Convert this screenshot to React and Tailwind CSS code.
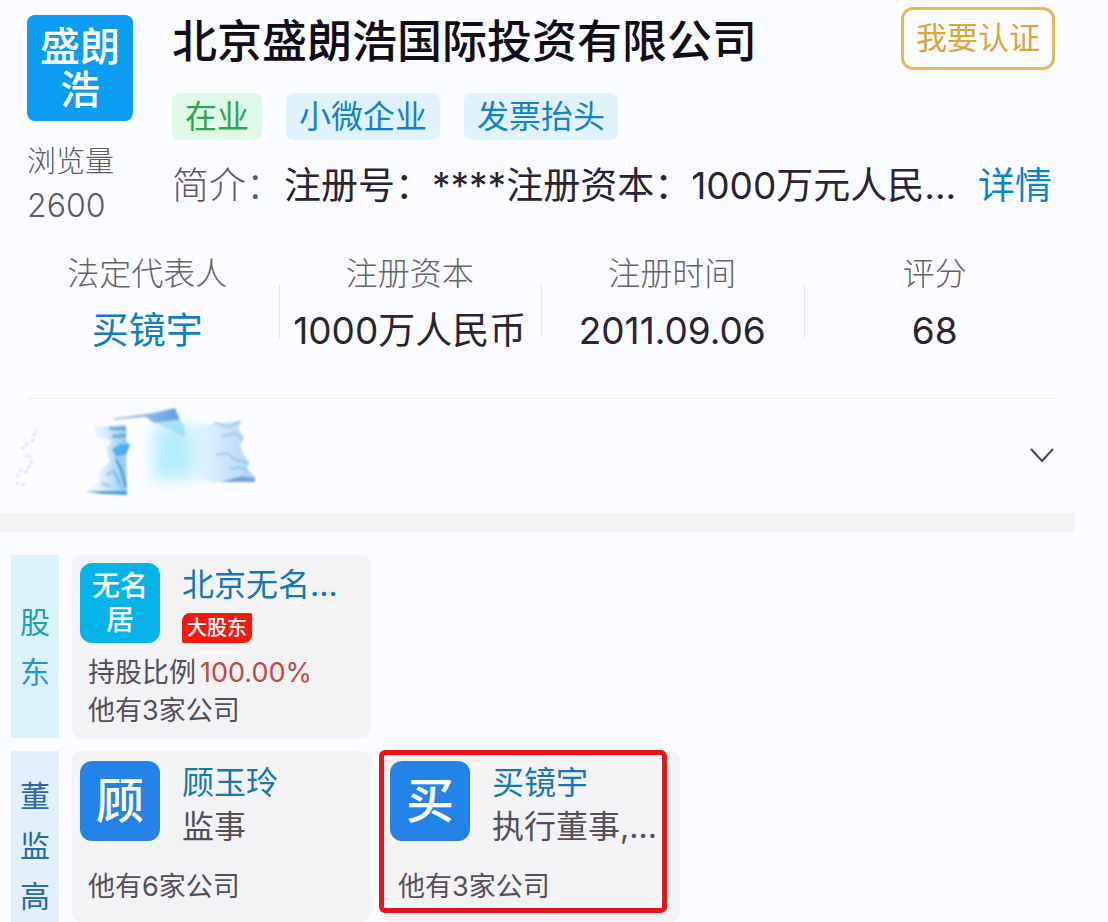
import { useState } from "react";

// ─── Data ─────────────────────────────────────────────────────────────────────
const TAGS = [
  { label: "在业", style: "bg-[#e0f9e6] text-[#2fa552]" },
  { label: "小微企业", style: "bg-[#e0f2fe] text-[#1283c6]" },
  { label: "发票抬头", style: "bg-[#e0f2fe] text-[#1283c6]" },
];

const STATS = [
  { label: "法定代表人", value: "买镜宇", href: "#legal" },
  { label: "注册资本", value: "1000万人民币" },
  { label: "注册时间", value: "2011.09.06" },
  { label: "评分", value: "68" },
];

const SHAREHOLDERS = [
  {
    name: "北京无名...",
    avatar: "无名居",
    color: "bg-[#06b3e8]",
    small: true,
    badge: "大股东",
    ratio: "100.00%",
    companies: "他有3家公司",
  },
];

const MANAGERS = [
  { name: "顾玉玲", avatar: "顾", color: "bg-[#2483e6]", role: "监事", companies: "他有6家公司" },
  { name: "买镜宇", avatar: "买", color: "bg-[#2483e6]", role: "执行董事,...", companies: "他有3家公司", marked: true },
];

// ─── Pieces ───────────────────────────────────────────────────────────────────
function PersonCard({ person }) {
  return (
    <article className={`relative w-[298px] shrink-0 rounded-lg bg-[#f3f3f6] px-2 ${person.ratio ? "pt-2 pb-2" : "pt-2.5 pb-4"}`}>
      <div className="flex gap-[22px]">
        <div
          className={`flex size-20 shrink-0 items-center justify-center rounded-xl text-center font-medium text-white ${person.color} ${
            person.small ? "px-3 text-[28px] leading-[34px]" : "text-5xl"
          }`}
        >
          {person.avatar}
        </div>
        <div className="whitespace-nowrap text-[32px] leading-[44px]">
          <a href="#person" className="block text-[#1478b4]">{person.name}</a>
          {person.badge && (
            <span className="mt-1.5 flex h-[30px] w-[70px] items-center justify-center rounded-tl-lg rounded-br-lg rounded-tr-xs rounded-bl-xs bg-[#f5190f] text-xl font-medium text-white">
              {person.badge}
            </span>
          )}
          {person.role && <p className="text-[#554e5a]">{person.role}</p>}
        </div>
      </div>
      <div className={`pl-2 text-[27px] leading-[38px] text-[#554e5a] ${person.ratio ? "mt-[11px]" : "mt-[19px]"}`}>
        {person.ratio && (
          <p className="flex gap-1">
            持股比例<span className="text-[#c24646]">{person.ratio}</span>
          </p>
        )}
        <p>{person.companies}</p>
      </div>
      {person.marked && (
        <div className="pointer-events-none absolute -top-px -left-[3px] h-[163px] w-[288px] rounded-md border-5 border-[#e61414]" />
      )}
    </article>
  );
}

function PeopleRow({ title, style, people }) {
  return (
    <section className="flex gap-[13px]">
      <h2 className={`flex w-12 shrink-0 flex-col items-center justify-center text-[30px] leading-[50px] ${style}`}>
        {title.split("").map((c) => (
          <span key={c}>{c}</span>
        ))}
      </h2>
      <div className="flex gap-3">
        {people.map((p) => (
          <PersonCard key={p.name} person={p} />
        ))}
      </div>
    </section>
  );
}

// Brush strokes that hide the phone number in the contact row
function Smudge() {
  return (
    <svg width="250" height="94" viewBox="0 0 250 94" aria-hidden="true">
      <defs>
        <linearGradient id="right" x1="0" x2="1">
          <stop offset="0" stopColor="#dff5ff" stopOpacity="0" />
          <stop offset="0.4" stopColor="#dcf1fe" />
          <stop offset="1" stopColor="#b0d3f4" />
        </linearGradient>
        <linearGradient id="left" x1="0" x2="1">
          <stop offset="0" stopColor="#dcf0ff" stopOpacity="0.1" />
          <stop offset="1" stopColor="#74bdf1" />
        </linearGradient>
        <linearGradient id="cap" x1="0" x2="1">
          <stop offset="0" stopColor="#b9d4f0" />
          <stop offset="1" stopColor="#5f9fe2" />
        </linearGradient>
        <filter id="haze" x="-40%" y="-40%" width="180%" height="180%">
          <feGaussianBlur stdDeviation="8" />
        </filter>
        <filter id="soft" x="-20%" y="-20%" width="140%" height="140%">
          <feGaussianBlur stdDeviation="1" />
        </filter>
      </defs>
      <path d="M146 24 L172 22 L200 32 L202 62 L186 74 L146 78Z" fill="#b4ecfe" filter="url(#haze)" />
      <g filter="url(#soft)">
        <path d="M168 22 L200 21 L234 18 L230 24 L236 36 L232 42 L236 52 L241 60 L239 66 L247 74 V79 L204 79 L180 72Z" fill="url(#right)" />
        <path d="M105 15 L146 10 L167 5 L172 17 L146 20 L138 14 L106 17Z" fill="url(#cap)" />
        <path d="M148 20 L171 16 L177 24 L176 34 L164 28Z" fill="#93d7f5" fillOpacity="0.7" />
        <path d="M86 24 L118 22 V38 L122 42 L118 52 L119 92 L78 88 L92 78 L90 70 L102 58 L98 46 L104 38 L88 33Z" fill="url(#left)" />
        <path d="M101 24 H118 V27 H101Z M104 32 L118 31 V34 L105 35Z" fill="#4d96d6" fillOpacity="0.7" />
        <path d="M104 46 L112 41 L122 42 L118 51 L108 54Z" fill="#2f9be8" fillOpacity="0.7" />
        <path d="M77 88 L119 88 V92 L94 91Z" fill="#3a9ad2" fillOpacity="0.9" />
        <path d="M108 56 L113 66 L118 84" stroke="#3d8fc4" strokeWidth="2" fill="none" />
        <path d="M98 72 L106 68 L112 82 M94 80 L102 84" stroke="#5aaee2" strokeWidth="3" strokeOpacity="0.5" fill="none" />
        <path d="M206 20 L222 24 L232 18 M214 34 L226 30 L235 36 M208 52 L220 50 L226 56 L241 60 M222 66 L232 64 L240 68" stroke="#8fb9e2" strokeWidth="2" strokeOpacity="0.7" fill="none" />
        <path d="M212 79 L234 73 L247 75 V79Z" fill="#6fa9df" />
      </g>
      <path d="M9 74 L13 67 L18 69 L24 58 L20 52 L16 54 M14 46 L19 42 L17 36 M24 39 L28 26 M8 80 L18 82" stroke="#d3d3d9" strokeWidth="2" strokeDasharray="3 3" fill="none" filter="url(#soft)" />
    </svg>
  );
}

// ─── Page ─────────────────────────────────────────────────────────────────────
export default function App() {
  const [open, setOpen] = useState(false);

  return (
    <main className="bg-[#fbfcff] font-[Inter,'Noto_Sans_CJK_SC',sans-serif] text-[#2b2430]">
      {/* Company header */}
      <header className="flex gap-[39px] pt-[15px] pr-[53px] pl-[27px]">
        <div className="w-[106px] shrink-0">
          <div className="flex h-[106px] items-center justify-center rounded-lg bg-[#0a9df2] px-3 text-center text-[40px] leading-[43px] font-medium text-white">
            盛朗浩
          </div>
          <p className="mt-[19px] text-[29px] leading-[44px] font-light whitespace-nowrap text-[#5f5965]">
            浏览量
            <br />
            <span className="text-[32px]">2600</span>
          </p>
        </div>

        <div className="min-w-0 flex-1">
          <div className="flex items-start justify-between">
            <h1 className="text-[45px] leading-[54px] font-medium whitespace-nowrap text-[#120c18]">
              北京盛朗浩国际投资有限公司
            </h1>
            <button className="-mt-2 h-[63px] w-[154px] shrink-0 rounded-xl border-3 border-[#e5b95a] text-[31px] text-[#dba53c]">
              我要认证
            </button>
          </div>
          <div className="mt-[23px] flex gap-6">
            {TAGS.map((t) => (
              <span key={t.label} className={`rounded-lg px-[13px] text-[32px] leading-[47px] ${t.style}`}>
                {t.label}
              </span>
            ))}
          </div>
          <div className="mt-[22px] flex items-center text-[37px] leading-[48px] whitespace-nowrap">
            <span className="w-[112px] font-light text-[#5f5965]">简介：</span>
            <p className="min-w-0 flex-1">注册号：****注册资本：1000万元人民...</p>
            <a href="#detail" className="shrink-0 pr-[3px] text-[#0f82cc]">详情</a>
          </div>
        </div>
      </header>

      {/* Key figures */}
      <dl className="mt-[25px] mr-[42px] ml-4 grid grid-cols-4">
        {STATS.map((s, i) => (
          <div key={s.label} className="relative flex flex-col items-center gap-3 whitespace-nowrap">
            <dt className="text-[32px] leading-10 font-light text-[#66606c]">{s.label}</dt>
            <dd className="text-[37px] leading-[50px]">
              {s.href ? <a href={s.href} className="text-[#0f7fc4]">{s.value}</a> : s.value}
            </dd>
            {i > 0 && <i className="absolute top-[30px] left-0 h-[54px] w-px bg-[#e4e4ea]" />}
          </div>
        ))}
      </dl>

      {/* Contact */}
      <div className="mt-[42px] mr-[52px] ml-7 border-t border-[#ececf1]" />
      <div className="flex h-[114px] items-start justify-between pt-1 pr-[53px] pl-2">
        <Smudge />
        <button aria-label="展开" aria-expanded={open} onClick={() => setOpen(!open)} className="mt-11">
          <svg width="26" height="16" viewBox="0 0 26 16" fill="none" stroke="#4b434f" strokeWidth="2">
            <path d="M2 2 L13 14 L24 2" />
          </svg>
        </button>
      </div>

      <div className="mr-[34px] h-[19px] bg-[#f2f3f5]" />

      {/* People */}
      <div className="flex flex-col gap-[13px] overflow-hidden pt-[23px] pl-[11px]">
        <PeopleRow title="股东" style="bg-[#dcf3fe] text-[#1f9bbd]" people={SHAREHOLDERS} />
        <PeopleRow title="董监高" style="bg-[#e2effd] pt-[18px] text-[#2a6aa6]" people={MANAGERS} />
      </div>
    </main>
  );
}
